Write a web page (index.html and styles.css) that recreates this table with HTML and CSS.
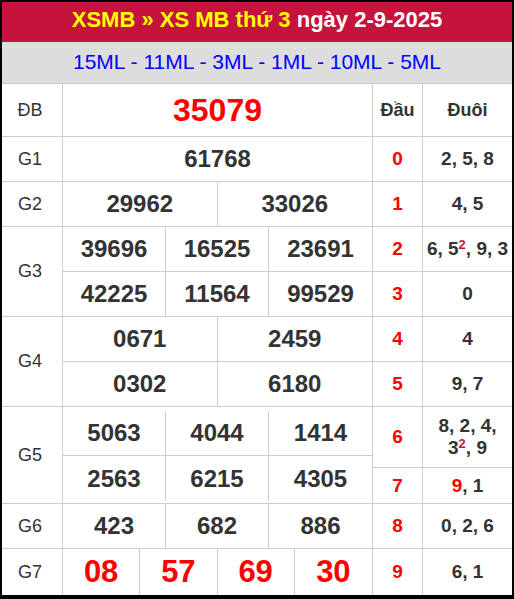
FILE: index.html
```html
<!DOCTYPE html>
<html lang="vi">
<head>
<meta charset="utf-8">
<title>XSMB thứ 3 ngày 2-9-2025</title>
<link rel="stylesheet" href="styles.css">
</head>
<body>
<div class="page">
  <div class="title"><span class="yl">XSMB » XS MB thứ 3</span> ngày 2-9-2025</div>
  <div class="codes">15ML - 11ML - 3ML - 1ML - 10ML - 5ML</div>
  <div class="board">
    <div class="prizes">
      <div class="prize p-db">
        <div class="lbl">ĐB</div>
        <div class="nums c1"><div class="cell big">35079</div></div>
      </div>
      <div class="prize p1">
        <div class="lbl">G1</div>
        <div class="nums c1"><div class="cell">61768</div></div>
      </div>
      <div class="prize p1">
        <div class="lbl">G2</div>
        <div class="nums c2"><div class="cell r">29962</div><div class="cell">33026</div></div>
      </div>
      <div class="prize p2">
        <div class="lbl">G3</div>
        <div class="nums c3 two">
          <div class="cell r b">39696</div><div class="cell r b">16525</div><div class="cell b">23691</div>
          <div class="cell r">42225</div><div class="cell r">11564</div><div class="cell">99529</div>
        </div>
      </div>
      <div class="prize p2">
        <div class="lbl">G4</div>
        <div class="nums c2 two">
          <div class="cell r b">0671</div><div class="cell b">2459</div>
          <div class="cell r">0302</div><div class="cell">6180</div>
        </div>
      </div>
      <div class="prize p5">
        <div class="lbl">G5</div>
        <div class="nums c3 five">
          <div class="cell r b">5063</div><div class="cell r b">4044</div><div class="cell b">1414</div>
          <div class="cell r">2563</div><div class="cell r">6215</div><div class="cell">4305</div>
        </div>
      </div>
      <div class="prize p1">
        <div class="lbl">G6</div>
        <div class="nums c3"><div class="cell r">423</div><div class="cell r">682</div><div class="cell">886</div></div>
      </div>
      <div class="prize p7">
        <div class="lbl">G7</div>
        <div class="nums c4">
          <div class="cell r red7">08</div><div class="cell r red7">57</div><div class="cell r red7">69</div><div class="cell red7">30</div>
        </div>
      </div>
    </div>
    <div class="loto">
      <div class="lr head"><div class="dau">Đầu</div><div class="duoi">Đuôi</div></div>
      <div class="lr"><div class="dau">0</div><div class="duoi"><span>2, 5, 8</span></div></div>
      <div class="lr"><div class="dau">1</div><div class="duoi"><span>4, 5</span></div></div>
      <div class="lr"><div class="dau">2</div><div class="duoi"><span>6, 5<sup>2</sup>, 9, 3</span></div></div>
      <div class="lr"><div class="dau">3</div><div class="duoi"><span>0</span></div></div>
      <div class="lr"><div class="dau">4</div><div class="duoi"><span>4</span></div></div>
      <div class="lr"><div class="dau">5</div><div class="duoi"><span>9, 7</span></div></div>
      <div class="lr tall"><div class="dau">6</div><div class="duoi"><span>8, 2, 4,<br>3<sup>2</sup>, 9</span></div></div>
      <div class="lr short"><div class="dau">7</div><div class="duoi"><span><span class="hit">9</span>, 1</span></div></div>
      <div class="lr"><div class="dau">8</div><div class="duoi"><span>0, 2, 6</span></div></div>
      <div class="lr last"><div class="dau">9</div><div class="duoi"><span>6, 1</span></div></div>
    </div>
  </div>
</div>
</body>
</html>
```
FILE: styles.css
```css
* { box-sizing: border-box; }
html, body { margin: 0; padding: 0; background: #000; }
body { font-family: "Liberation Sans", Arial, sans-serif; color: #333; }

.page {
  margin: 2px 0 0 2px;
  width: 510px;
  background: #fff;
}

.title {
  height: 40px;
  line-height: 35px;
  background: #c4133c;
  color: #fff;
  font-weight: bold;
  font-size: 22px;
  text-align: center;
  white-space: nowrap;
}
.title .yl { color: #ffff00; }

.codes {
  height: 42px;
  line-height: 40px;
  background: #dddddd;
  border-bottom: 1px solid #c8c8c8;
  color: #0000ff;
  font-size: 21px;
  text-align: center;
  white-space: nowrap;
}

.board { display: flex; }

.prizes { width: 370px; }
.prize {
  display: flex;
  border-bottom: 1px solid #ccc;
}
.p-db { height: 53px; }
.p1 { height: 45px; }
.p2 { height: 90px; }
.p5 { height: 97px; }
.p7 { height: 46px; border-bottom: 0; }

.lbl {
  width: 61px;
  border-right: 1px solid #ccc;
  display: flex;
  align-items: center;
  justify-content: center;
  padding-right: 4px;
  font-size: 18px;
  color: #333;
}

.nums {
  flex: 1;
  display: grid;
  grid-auto-rows: 1fr;
}
.c1 { grid-template-columns: 1fr; }
.c2 { grid-template-columns: 1fr 1fr; }
.c3 { grid-template-columns: 1fr 1fr 1fr; }
.c4 { grid-template-columns: 1fr 1fr 1fr 1fr; }
.two { grid-template-rows: 45px 44px; }
.five { grid-template-rows: 45px 45px; padding: 4px 0 2px; }

.cell {
  display: flex;
  align-items: center;
  justify-content: center;
  font-size: 24px;
  font-weight: bold;
  color: #333;
}
.cell.r { border-right: 1px solid #ccc; }
.cell.b { border-bottom: 1px solid #ccc; }
.cell.big { color: #ff0000; font-size: 32px; }
.cell.red7 { color: #ff0000; font-size: 31px; }

.loto {
  width: 140px;
  border-left: 1px solid #ccc;
}
.lr {
  display: grid;
  grid-template-columns: 50px 1fr;
  height: 45px;
  border-bottom: 1px solid #ccc;
  font-weight: bold;
  font-size: 19px;
}
.lr.head { height: 53px; font-size: 18px; }
.lr.tall { height: 61px; }
.lr.short { height: 36px; }
.lr.last { height: 46px; border-bottom: 0; }

.dau, .duoi {
  display: flex;
  align-items: center;
  justify-content: center;
  text-align: center;
  white-space: nowrap;
  line-height: 22px;
}
.dau { border-right: 1px solid #ccc; color: #ff0000; }
.head .dau { color: #333; }
.duoi { color: #333; }
.duoi sup {
  font-size: 13px;
  line-height: 0;
  color: #c4133c;
  vertical-align: 6px;
}
.hit { color: #ff0000; }
```
